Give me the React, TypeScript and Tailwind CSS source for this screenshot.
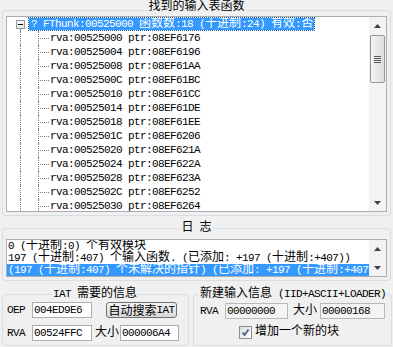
import type { ReactNode } from 'react';
import clsx from 'clsx';

// split text into ascii / cjk runs so that ascii keeps a 6px mono cell and cjk a 12px cell
const runs = (s: string) => s.match(/[\x00-\x7f]+|[^\x00-\x7f]+/g) ?? [];

function T({ children }: { children: string }) {
  return (
    <>
      {runs(children).map((run, i) =>
        /^[\x00-\x7f]/.test(run) ? (
          <span key={i}>{run}</span>
        ) : (
          <span
            key={i}
            className="inline-block font-['Noto_Sans_CJK_SC',sans-serif] text-[12px] leading-[6px] tracking-normal"
          >
            {run}
          </span>
        )
      )}
    </>
  );
}

const thunks = [
  ['00525000', '08EF6176'],
  ['00525004', '08EF6196'],
  ['00525008', '08EF61AA'],
  ['0052500C', '08EF61BC'],
  ['00525010', '08EF61CC'],
  ['00525014', '08EF61DE'],
  ['00525018', '08EF61EE'],
  ['0052501C', '08EF6206'],
  ['00525020', '08EF621A'],
  ['00525024', '08EF622A'],
  ['00525028', '08EF623A'],
  ['0052502C', '08EF6252'],
  ['00525030', '08EF6264'],
];

function Group({
  title,
  titleClass,
  className,
  children,
}: {
  title: string;
  titleClass: string;
  className?: string;
  children: ReactNode;
}) {
  return (
    <div className={clsx('relative rounded-[3px] border border-[#d5dfe5]', className)}>
      <div
        className={clsx(
          'absolute whitespace-pre bg-[#f0f0f0] px-[1px] leading-[13px]',
          titleClass
        )}
      >
        <T>{title}</T>
      </div>
      {children}
    </div>
  );
}

function Arrow({ down }: { down?: boolean }) {
  return (
    <svg width="7" height="4" viewBox="0 0 7 4">
      <polygon
        points={down ? '0,0 7,0 3.5,4' : '0,4 7,4 3.5,0'}
        fill="#404040"
      />
    </svg>
  );
}

function ScrollBar({ thumb }: { thumb?: boolean }) {
  return (
    <div className="flex w-[17px] flex-col bg-[#f3f3f3]">
      <div className="flex h-[17px] items-center justify-center">
        <Arrow />
      </div>
      {thumb && (
        <div className="mx-[1px] mt-[1px] flex h-[48px] flex-col items-center justify-center gap-[1px] rounded-[2px] border border-[#979797] bg-linear-to-r from-[#f4f4f4] to-[#dedede]">
          <div className="h-[1px] w-[7px] bg-[#5a5a5a]" />
          <div className="h-[1px] w-[7px] bg-[#5a5a5a]" />
          <div className="h-[1px] w-[7px] bg-[#5a5a5a]" />
          <div className="h-[1px] w-[7px] bg-[#5a5a5a]" />
        </div>
      )}
      <div className="flex-1" />
      <div className="flex h-[17px] items-center justify-center">
        <Arrow down />
      </div>
    </div>
  );
}

function Edit({
  value,
  className,
  disabled,
}: {
  value: string;
  className: string;
  disabled?: boolean;
}) {
  return (
    <div
      className={clsx(
        'flex h-[16px] items-center whitespace-pre border pl-[1px] leading-[14px]',
        disabled ? 'border-[#b8b8b8] bg-[#f4f4f4]' : 'border-[#abadb3] bg-white',
        className
      )}
    >
      <T>{value}</T>
    </div>
  );
}

export default function App() {
  return (
    <div className="h-[347px] w-[393px] overflow-hidden bg-[#f0f0f0] font-['Liberation_Mono',monospace] text-[11px] tracking-[-0.6px] text-black">
      <Group
        title="找到的输入表函数"
        titleClass="-top-[10px] left-1/2 -translate-x-1/2"
        className="mx-[2px] mt-[10px] px-[3px] pb-[3px] pt-[5px]"
      >
        <div className="flex h-[196px] border border-[#abadb3] bg-white">
          <div className="flex-1 overflow-hidden whitespace-pre leading-[15px]">
            <div className="flex h-[14px]">
              <div className="w-[9px]" />
              <div className="flex w-[9px] flex-col">
                <div className="h-[3px]" />
                <div className="flex h-[9px] items-center justify-center border border-[#919b9c] bg-linear-to-br from-white to-[#e4e4e4]">
                  <div className="h-[1px] w-[5px] bg-black" />
                </div>
                <div className="ml-[4px] flex-1 border-l border-dotted border-[#808080]" />
              </div>
              <div className="w-[4px]" />
              <div className="mt-[1px] h-[12px] bg-[#3399ff] pl-[2px] pr-[1px] leading-[13px] text-white outline-1 outline-dotted outline-[#1d5fa8]">
                <T>? FThunk:00525000 函数数:18 (十进制:24) 有效:否</T>
              </div>
            </div>
            {thunks.map(([rva, ptr]) => (
              <div key={rva} className="flex h-[14px]">
                <div className="w-[13px]" />
                <div className="w-[18px] border-l border-dotted border-[#808080]" />
                <div className="flex w-[12px] items-center border-l border-dotted border-[#808080]">
                  <div className="ml-[1px] w-[9px] border-t border-dotted border-[#808080]" />
                </div>
                <div>
                  <T>{`rva:${rva} ptr:${ptr}`}</T>
                </div>
              </div>
            ))}
          </div>
          <ScrollBar thumb />
        </div>
      </Group>

      <Group
        title="日 志"
        titleClass="-top-[7px] left-1/2 -translate-x-1/2"
        className="mx-[2px] mt-[12px] px-[3px] pb-[3px] pt-[10px]"
      >
        <div className="flex h-[38px] border border-[#abadb3] bg-white">
          <div className="flex-1 overflow-hidden whitespace-pre leading-[12px]">
            <div className="h-[12px] pl-[1px]">
              <T>0 (十进制:0) 个有效模块</T>
            </div>
            <div className="h-[12px] pl-[1px]">
              <T>197 (十进制:407) 个输入函数. (已添加: +197 (十进制:+407))</T>
            </div>
            <div className="h-[12px] bg-[#3399ff] pl-[1px] text-white">
              <T>(197 (十进制:407) 个未解决的指针) (已添加: +197 (十进制:+407))</T>
            </div>
          </div>
          <ScrollBar />
        </div>
      </Group>

      <div className="mt-[13px] flex gap-[4px] pl-[2px]">
        <Group
          title="IAT 需要的信息"
          titleClass="-top-[7px] left-[49px]"
          className="h-[52px] w-[187px] pl-[4px] pt-[7px]"
        >
          <div className="flex flex-col gap-[7px] whitespace-pre">
            <div className="flex h-[16px] items-center">
              <div className="w-[25px]">
                <T>OEP</T>
              </div>
              <Edit value="004ED9E6" className="w-[60px]" />
              <button
                type="button"
                className="ml-[14px] flex h-[16px] w-[71px] items-center justify-center rounded-[3px] border border-[#707070] bg-linear-to-b from-[#f2f2f2] to-[#d9d9d9] leading-[14px]"
              >
                <T>自动搜索IAT</T>
              </button>
            </div>
            <div className="flex h-[16px] items-center">
              <div className="w-[25px]">
                <T>RVA</T>
              </div>
              <Edit value="00524FFC" className="w-[60px]" />
              <div className="ml-[3px] w-[25px]">
                <T>大小</T>
              </div>
              <Edit value="000006A4" className="w-[59px]" />
            </div>
          </div>
        </Group>

        <Group
          title="新建输入信息 (IID+ASCII+LOADER)"
          titleClass="-top-[7px] left-[5px]"
          className="h-[52px] w-[199px] pl-[6px] pt-[8px]"
        >
          <div className="flex flex-col whitespace-pre">
            <div className="flex h-[16px] items-center">
              <div className="w-[25px]">
                <T>RVA</T>
              </div>
              <Edit value="00000000" className="w-[63px]" disabled />
              <div className="ml-[5px] w-[27px]">
                <T>大小</T>
              </div>
              <Edit value="00000168" className="w-[65px]" disabled />
            </div>
            <div className="ml-[39px] mt-[7px] flex h-[13px] items-center gap-[3px] leading-[13px]">
              <div className="flex h-[13px] w-[13px] items-center justify-center border border-[#8f8f8f] bg-linear-to-br from-[#dcdcdc] to-white">
                <svg width="9" height="9" viewBox="0 0 9 9">
                  <polyline
                    points="1.5,4.5 3.5,7 7.5,1.5"
                    fill="none"
                    stroke="#4a5f87"
                    strokeWidth="1.8"
                  />
                </svg>
              </div>
              <div>
                <T>增加一个新的块</T>
              </div>
            </div>
          </div>
        </Group>
      </div>
    </div>
  );
}
